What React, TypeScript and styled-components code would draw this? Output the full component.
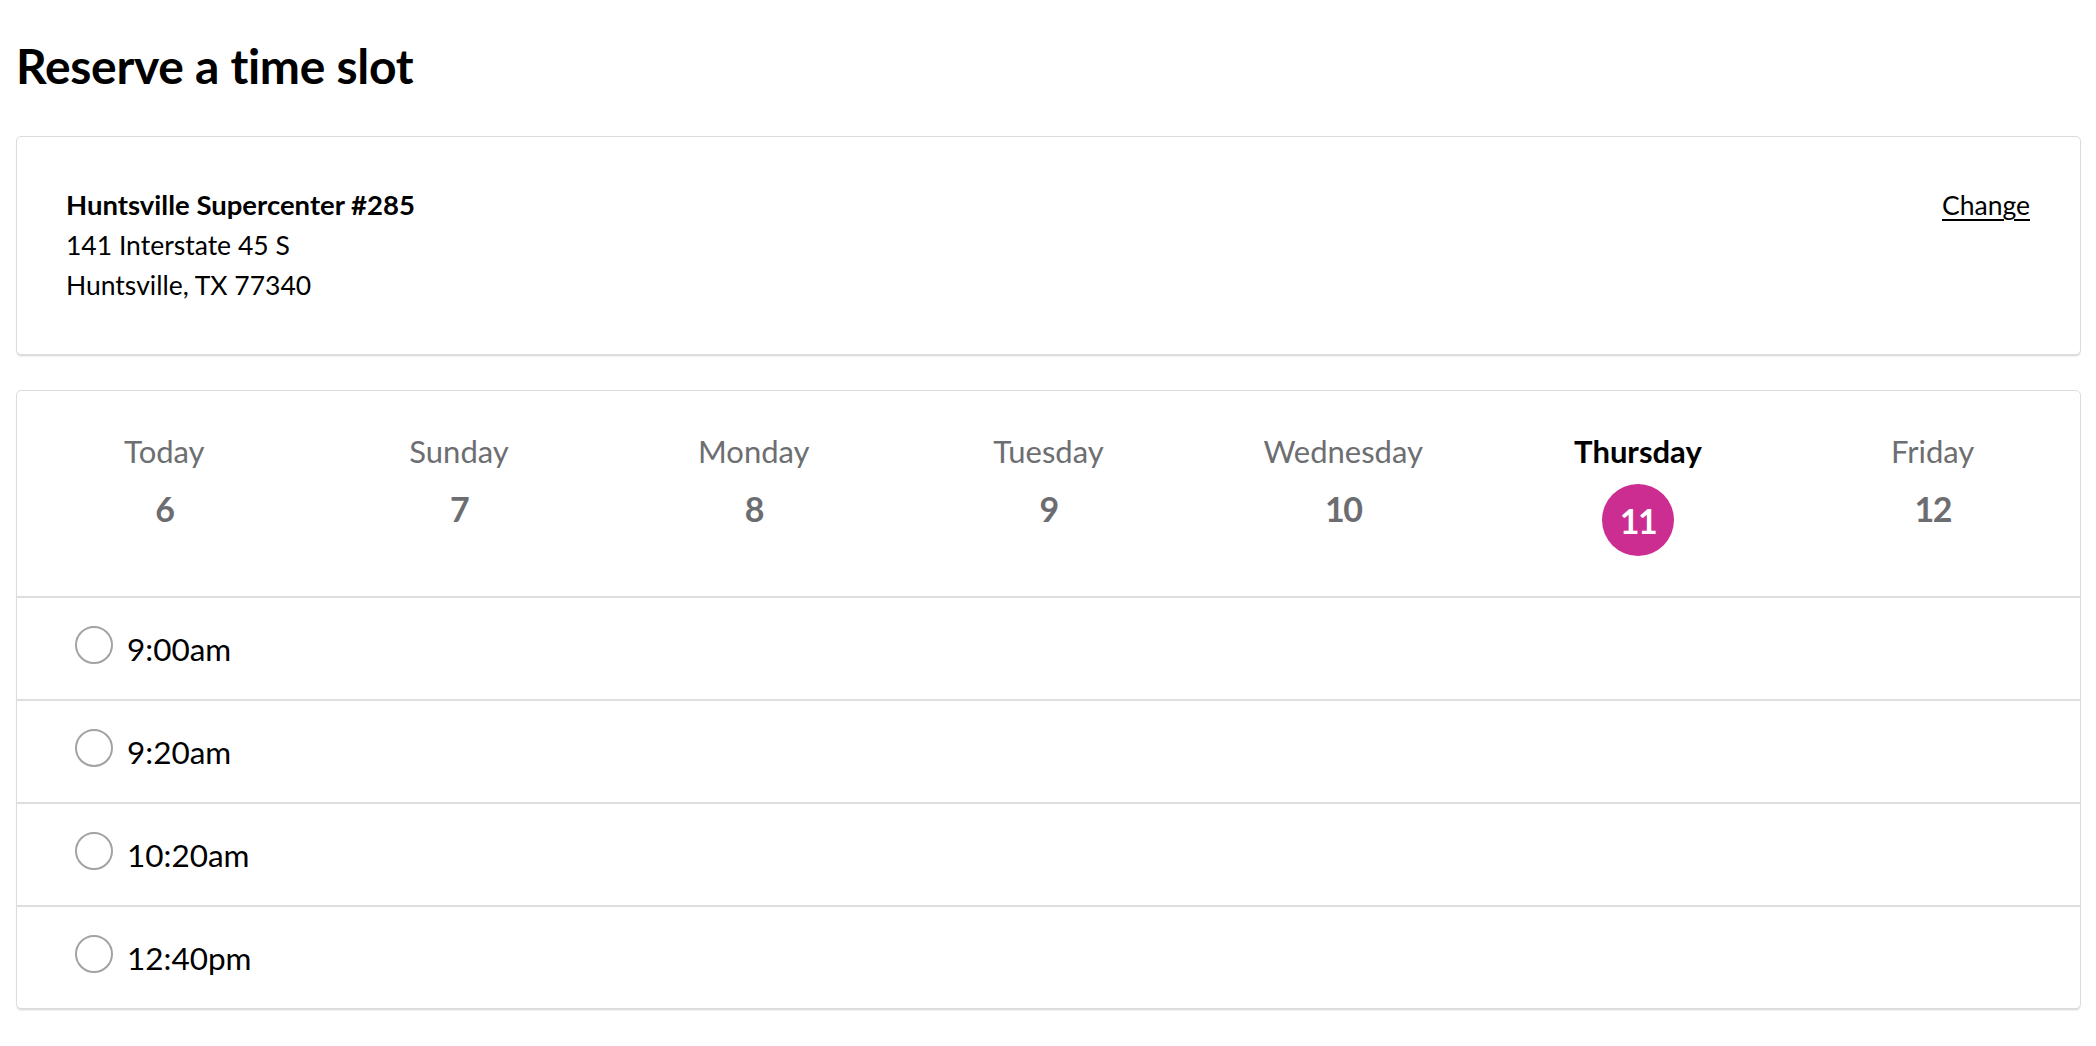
import * as React from 'react';
import styled, { createGlobalStyle } from 'styled-components';

const GlobalStyle = createGlobalStyle`
    body {
        margin: 0;
        background: #fff;
        font-family: Lato, "Noto Sans", sans-serif;
        color: #000;
    }
`;

const Page = styled.main`
    padding: 36px 15px 0 16px;
`;

const Title = styled.h1`
    margin: 0 0 40px;
    font-size: 48px;
    line-height: 60px;
    font-weight: 700;
    letter-spacing: -0.3px;
`;

const Card = styled.section`
    background: #fff;
    border: 1px solid #dcdcdc;
    border-radius: 5px;
    box-shadow: 0 2px 2px -1px rgba(0, 0, 0, 0.18);
    margin-bottom: 35px;
    overflow: hidden;
`;

const StoreBody = styled.div`
    display: flex;
    justify-content: space-between;
    align-items: flex-start;
    padding: 48px 50px 49px 49px;
    font-size: 26.5px;
    line-height: 40px;
`;

const StoreName = styled.div`
    font-weight: 700;
    font-size: 27.5px;
`;

const ChangeLink = styled.a`
    color: #000;
    text-decoration: underline;
    text-underline-offset: 4px;
    cursor: pointer;
`;

const DayGrid = styled.div`
    display: grid;
    grid-template-columns: repeat(7, 1fr);
    padding: 40px 0 40px;
    border-bottom: 2px solid #dedede;
`;

const Day = styled.button`
    display: flex;
    flex-direction: column;
    align-items: center;
    gap: 13px;
    background: transparent;
    border: none;
    padding: 0;
    font-family: inherit;
    cursor: pointer;
`;

const DayLabel = styled.span<{ $selected?: boolean }>`
    font-size: 31px;
    line-height: 40px;
    font-weight: ${(p) => (p.$selected ? 700 : 400)};
    color: ${(p) => (p.$selected ? '#000' : '#6d6e71')};
`;

const DayNum = styled.span<{ $selected?: boolean }>`
    display: flex;
    align-items: center;
    justify-content: center;
    font-size: 34px;
    font-weight: 700;
    letter-spacing: -1.5px;
    width: ${(p) => (p.$selected ? '72px' : 'auto')};
    height: ${(p) => (p.$selected ? '72px' : '48px')};
    border-radius: 50%;
    background: ${(p) => (p.$selected ? '#cc2d91' : 'transparent')};
    color: ${(p) => (p.$selected ? '#fff' : '#6c6d70')};
`;

const SlotRow = styled.label`
    display: flex;
    align-items: center;
    gap: 14px;
    height: 101px;
    padding-left: 58px;
    font-size: 31.5px;
    cursor: pointer;

    & + & {
        border-top: 2px solid #dedede;
    }
`;

const Radio = styled.span`
    width: 34px;
    height: 34px;
    border-radius: 50%;
    border: 2px solid #a3a3a3;
    margin-top: -7px;
    flex-shrink: 0;
`;

const days = [
    { label: 'Today', num: 6 },
    { label: 'Sunday', num: 7 },
    { label: 'Monday', num: 8 },
    { label: 'Tuesday', num: 9 },
    { label: 'Wednesday', num: 10 },
    { label: 'Thursday', num: 11 },
    { label: 'Friday', num: 12 }
];

const slots = ['9:00am', '9:20am', '10:20am', '12:40pm'];

export default function App() {
    const [selected, setSelected] = React.useState(11);

    return (
        <Page>
            <GlobalStyle />
            <Title>Reserve a time slot</Title>
            <Card>
                <StoreBody>
                    <div>
                        <StoreName>Huntsville Supercenter #285</StoreName>
                        <div>141 Interstate 45 S</div>
                        <div>Huntsville, TX 77340</div>
                    </div>
                    <ChangeLink>Change</ChangeLink>
                </StoreBody>
            </Card>
            <Card>
                <DayGrid>
                    {days.map((d) => {
                        const isSel = d.num === selected;
                        return (
                            <Day key={d.num} onClick={() => setSelected(d.num)}>
                                <DayLabel $selected={isSel}>{d.label}</DayLabel>
                                <DayNum $selected={isSel}>{d.num}</DayNum>
                            </Day>
                        );
                    })}
                </DayGrid>
                {slots.map((s) => (
                    <SlotRow key={s}>
                        <Radio />
                        {s}
                    </SlotRow>
                ))}
            </Card>
        </Page>
    );
}
